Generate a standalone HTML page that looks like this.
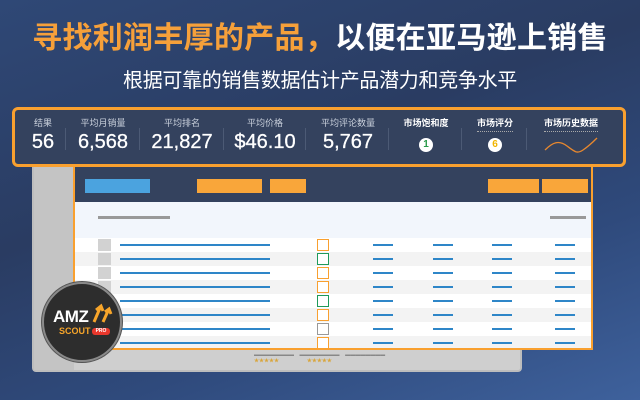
<!DOCTYPE html>
<html><head><meta charset="utf-8"><style>
*{margin:0;padding:0;box-sizing:border-box}
body{width:640px;height:400px;overflow:hidden;position:relative;font-family:"Liberation Sans","Noto Sans CJK SC",sans-serif;
background:linear-gradient(160deg,#2f4876 0%,#2a3c62 40%,#2f4a7c 70%,#3e619c 100%);}
.a{position:absolute}
.t1{left:0;width:640px;top:13px;text-align:center;font-size:30px;font-weight:bold;color:#fff;white-space:nowrap;letter-spacing:0.3px}
.t1 span{color:#f6a03a}
.t2{left:0;width:640px;top:64px;text-align:center;font-size:20px;color:#fff;white-space:nowrap;letter-spacing:-0.3px}
.stats{left:12px;top:107px;width:614px;height:60px;border:3px solid #f9a02f;border-radius:6px;background:#34425e;color:#fff}
.lab{position:absolute;top:6px;font-size:9px;color:#c9d0dc;text-align:center;transform:translateX(-50%);white-space:nowrap}
.lab.w{color:#fff;font-weight:bold}
.num{position:absolute;top:21px;font-size:20px;text-align:center;transform:translateX(-50%);white-space:nowrap;-webkit-text-stroke:0.3px #fff}
.div{position:absolute;top:18px;width:1px;height:22px;background:#4c5a75}
.back{left:32px;top:160px;width:490px;height:212px;background:#cfcfcf;border:2px solid #bdbdbd;border-radius:4px}
.win{left:73px;top:165px;width:520px;height:185px;border:2px solid #f9a02f;border-top:none;background:#fff;overflow:hidden}
.hdr{left:0;top:0;width:100%;height:37px;background:#34425e}
.btn{position:absolute;height:14px;top:14px}
.row{position:absolute;left:0;width:100%;height:14px}
.sq{position:absolute;left:23px;top:1px;width:13px;height:12px;background:#d2d2d2}
.bl{position:absolute;left:45px;top:6px;width:150px;height:2px;background:#2e86c8}
.cb{position:absolute;left:242px;top:1px;width:12px;height:12px;border:1.5px solid #f9a02f;background:#fff}
.sd{position:absolute;top:6px;width:20px;height:2px;background:#2e86c8}
</style></head><body>
<div class="a t1"><span>寻找利润丰厚的产品，</span>以便在亚马逊上销售</div>
<div class="a t2">根据可靠的销售数据估计产品潜力和竞争水平</div>

<div class="a back">
 <div class="a" style="left:0;top:0;width:40px;height:208px;background:#c4c4c4"></div>
 <div class="a" style="left:220px;top:190px;font-size:5px;line-height:6px;color:#888;width:260px">▬▬▬▬▬▬▬▬&nbsp;&nbsp;&nbsp;&nbsp;▬▬▬▬▬▬▬▬&nbsp;&nbsp;&nbsp;&nbsp;▬▬▬▬▬▬▬▬<br><span style="color:#d9a53a">★★★★★</span>&nbsp;&nbsp;&nbsp;&nbsp;&nbsp;&nbsp;&nbsp;&nbsp;&nbsp;&nbsp;&nbsp;&nbsp;&nbsp;&nbsp;&nbsp;&nbsp;&nbsp;&nbsp;&nbsp;&nbsp;<span style="color:#d9a53a">★★★★★</span></div>
</div>

<div class="a win">
 <div class="a hdr">
  <div class="btn" style="left:10px;width:65px;background:#4ba3df"></div>
  <div class="btn" style="left:122px;width:65px;background:#f9a63a"></div>
  <div class="btn" style="left:195px;width:36px;background:#f9a63a"></div>
  <div class="btn" style="left:413px;width:51px;background:#f9a63a"></div>
  <div class="btn" style="left:467px;width:46px;background:#f9a63a"></div>
 </div>
 <div class="a" style="left:0;top:37px;width:100%;height:36px;background:#f2f6fc">
  <div class="a" style="left:23px;top:14px;width:72px;height:3px;background:#999"></div>
  <div class="a" style="left:475px;top:14px;width:36px;height:3px;background:#999"></div>
 </div>
 <div class="a" style="left:0;top:73px;width:100%">
  <div class="row" style="top:0;background:#fff"><div class="sq"></div><div class="bl"></div><div class="cb"></div><div class="sd" style="left:298px"></div><div class="sd" style="left:358px"></div><div class="sd" style="left:417px"></div><div class="sd" style="left:480px"></div></div>
  <div class="row" style="top:14px;background:#f3f3f3"><div class="sq"></div><div class="bl"></div><div class="cb" style="border-color:#1f9a5a"></div><div class="sd" style="left:298px"></div><div class="sd" style="left:358px"></div><div class="sd" style="left:417px"></div><div class="sd" style="left:480px"></div></div>
  <div class="row" style="top:28px;background:#fff"><div class="sq"></div><div class="bl"></div><div class="cb"></div><div class="sd" style="left:298px"></div><div class="sd" style="left:358px"></div><div class="sd" style="left:417px"></div><div class="sd" style="left:480px"></div></div>
  <div class="row" style="top:42px;background:#f3f3f3"><div class="sq"></div><div class="bl"></div><div class="cb"></div><div class="sd" style="left:298px"></div><div class="sd" style="left:358px"></div><div class="sd" style="left:417px"></div><div class="sd" style="left:480px"></div></div>
  <div class="row" style="top:56px;background:#fff"><div class="sq"></div><div class="bl"></div><div class="cb" style="border-color:#1f9a5a"></div><div class="sd" style="left:298px"></div><div class="sd" style="left:358px"></div><div class="sd" style="left:417px"></div><div class="sd" style="left:480px"></div></div>
  <div class="row" style="top:70px;background:#f3f3f3"><div class="sq"></div><div class="bl"></div><div class="cb"></div><div class="sd" style="left:298px"></div><div class="sd" style="left:358px"></div><div class="sd" style="left:417px"></div><div class="sd" style="left:480px"></div></div>
  <div class="row" style="top:84px;background:#fff"><div class="sq"></div><div class="bl"></div><div class="cb" style="border-color:#999"></div><div class="sd" style="left:298px"></div><div class="sd" style="left:358px"></div><div class="sd" style="left:417px"></div><div class="sd" style="left:480px"></div></div>
  <div class="row" style="top:98px;background:#f3f3f3"><div class="sq"></div><div class="bl"></div><div class="cb"></div><div class="sd" style="left:298px"></div><div class="sd" style="left:358px"></div><div class="sd" style="left:417px"></div><div class="sd" style="left:480px"></div></div>
 </div>
</div>

<div class="a stats">
 <div class="lab" style="left:28px">结果</div><div class="num" style="left:28px">56</div>
 <div class="div" style="left:50px"></div>
 <div class="lab" style="left:88px">平均月销量</div><div class="num" style="left:88px">6,568</div>
 <div class="div" style="left:124px"></div>
 <div class="lab" style="left:167px">平均排名</div><div class="num" style="left:167px">21,827</div>
 <div class="div" style="left:208px"></div>
 <div class="lab" style="left:250px">平均价格</div><div class="num" style="left:250px">$46.10</div>
 <div class="div" style="left:290px"></div>
 <div class="lab" style="left:333px">平均评论数量</div><div class="num" style="left:333px">5,767</div>
 <div class="div" style="left:373px"></div>
 <div class="lab w" style="left:411px">市场饱和度</div>
 <div class="a" style="left:404px;top:28px;width:14px;height:14px;border-radius:50%;background:#fff;color:#2a9a4a;font-size:10px;font-weight:bold;text-align:center;line-height:14px">1</div>
 <div class="div" style="left:446px"></div>
 <div class="lab w" style="left:480px;border-bottom:1px dotted #aaa;padding-bottom:2px">市场评分</div>
 <div class="a" style="left:473px;top:28px;width:14px;height:14px;border-radius:50%;background:#fff;color:#f0b400;font-size:10px;font-weight:bold;text-align:center;line-height:14px">6</div>
 <div class="div" style="left:511px"></div>
 <div class="lab w" style="left:556px;border-bottom:1px dotted #aaa;padding-bottom:2px">市场历史数据</div>
 <svg class="a" style="left:528px;top:24px" width="56" height="22"><path d="M2 16 C10 8,16 6,24 12 S34 20,40 16 S50 8,54 4" fill="none" stroke="#e8882e" stroke-width="1.3"/></svg>
</div>

<div class="a" style="left:42px;top:282px;width:80px;height:80px;border-radius:50%;background:#2d2d2d;border:2px solid #8a8a8a;box-shadow:0 0 0 1px #555">
 <div class="a" style="left:9px;top:23px;font-size:17px;font-weight:bold;color:#fff;letter-spacing:-0.5px">AMZ</div>
 <svg class="a" style="left:47px;top:18px" width="24" height="22"><path d="M3 20 L9 6 M5 8 L10 4 L12 9" stroke="#f7a52a" stroke-width="3" fill="none"/><path d="M12 20 L17 9 M14 10 L18 7 L20 12" stroke="#f7a52a" stroke-width="3" fill="none"/></svg>
 <div class="a" style="left:15px;top:42px;font-size:9px;font-weight:bold;color:#f7a52a">SCOUT</div>
 <div class="a" style="left:48px;top:44px;width:18px;height:7px;border-radius:3px;background:#e8372c;color:#fff;font-size:5px;font-weight:bold;text-align:center;line-height:7px">PRO</div>
</div>
</body></html>
